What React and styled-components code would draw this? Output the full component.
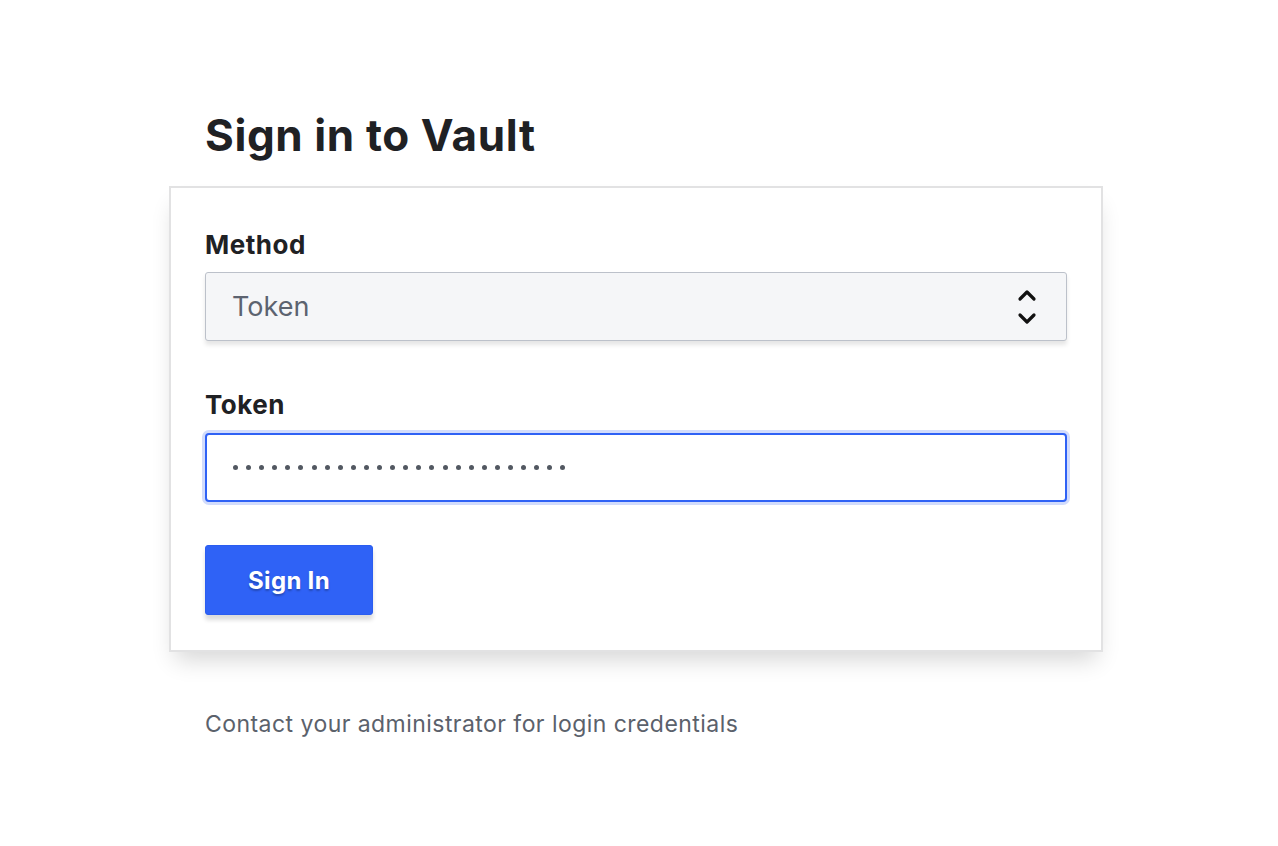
import styled, { createGlobalStyle } from 'styled-components';

const GlobalStyle = createGlobalStyle`
  html, body {
    margin: 0;
    padding: 0;
    background: #ffffff;
  }
  body {
    font-family: Inter, "Noto Sans", "Liberation Sans", sans-serif;
    color: #1f2124;
  }
`;

const Page = styled.main`
  width: 934px;
  margin: 0 auto;
  padding: 106px 6px 0 0;
`;

const Title = styled.h1`
  margin: 0 0 22px 36px;
  font-size: 44px;
  line-height: 58px;
  font-weight: 700;
  letter-spacing: 0.6px;
  color: #1f2124;
`;

const Card = styled.section`
  box-sizing: border-box;
  background: #fff;
  border: 2px solid #e2e2e3;
  box-shadow: 0 14px 22px -6px rgba(0, 0, 0, 0.16);
  padding: 42px 34px 35px 34px;
`;

const Field = styled.div`
  display: flex;
  flex-direction: column;
  gap: ${({ $labelGap }) => $labelGap}px;
  margin-bottom: ${({ $gap }) => $gap}px;
`;

const Label = styled.label`
  font-size: 26px;
  line-height: 30px;
  font-weight: 700;
  letter-spacing: 0.5px;
  color: #1f2124;
`;

const SelectBox = styled.div`
  box-sizing: border-box;
  height: 69px;
  display: flex;
  align-items: center;
  justify-content: space-between;
  padding: 0 28px 0 26px;
  background: #f5f6f8;
  border: 1px solid #bcc1ca;
  border-radius: 3px;
  box-shadow: 0 4px 4px rgba(0, 0, 0, 0.1);
  font-size: 27px;
  color: #5c6370;
`;

const Chevrons = styled.svg`
  width: 22px;
  height: 38px;
  color: #111;
`;

const TokenInput = styled.div`
  box-sizing: border-box;
  height: 69px;
  display: flex;
  align-items: center;
  padding: 0 26px;
  background: #fff;
  border: 2px solid #2f62f5;
  border-radius: 4px;
  box-shadow: 0 0 0 3px #d2dcfc;
`;

const Dots = styled.div`
  display: flex;
  gap: 8.1px;
`;

const Dot = styled.span`
  width: 5px;
  height: 5px;
  border-radius: 50%;
  background: #525861;
`;

const Button = styled.button`
  box-sizing: border-box;
  width: 168px;
  height: 70px;
  border: 1px solid #2a5df0;
  border-radius: 3px;
  background: #2f62f6;
  color: #fff;
  font-family: inherit;
  font-size: 24px;
  font-weight: 700;
  letter-spacing: 0.3px;
  text-shadow: 0 2px 2px rgba(0, 0, 0, 0.25);
  box-shadow: 0 5px 4px rgba(0, 0, 0, 0.14);
  cursor: pointer;
`;

const Note = styled.p`
  margin: 58px 0 0 36px;
  font-size: 23px;
  line-height: 28px;
  letter-spacing: 0.45px;
  color: #5b616b;
`;

export default function App() {
  return (
    <>
      <GlobalStyle />
      <Page>
        <Title>Sign in to Vault</Title>
        <Card>
          <Field $labelGap={12} $gap={49}>
            <Label>Method</Label>
            <SelectBox>
              Token
              <Chevrons viewBox="0 0 22 38" fill="none" stroke="currentColor" strokeWidth="3.2" strokeLinecap="round" strokeLinejoin="round">
                <path d="M4 11 L11 4 L18 11" />
                <path d="M4 27 L11 34 L18 27" />
              </Chevrons>
            </SelectBox>
          </Field>
          <Field $labelGap={13} $gap={43}>
            <Label>Token</Label>
            <TokenInput>
              <Dots>
                {Array.from({ length: 26 }).map((_, i) => (
                  <Dot key={i} />
                ))}
              </Dots>
            </TokenInput>
          </Field>
          <Button>Sign In</Button>
        </Card>
        <Note>Contact your administrator for login credentials</Note>
      </Page>
    </>
  );
}
